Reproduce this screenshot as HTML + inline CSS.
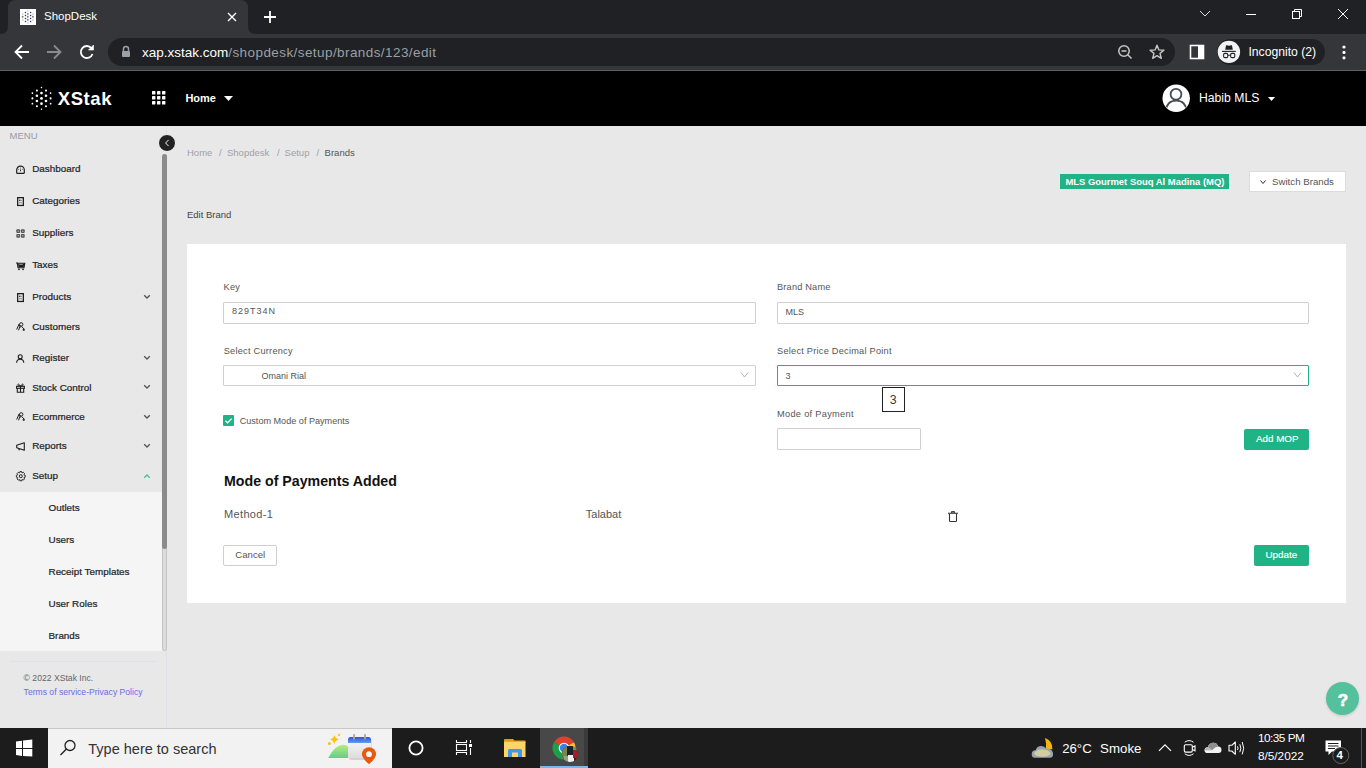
<!DOCTYPE html>
<html><head><meta charset="utf-8"><title>ShopDesk</title>
<style>
html,body{margin:0;padding:0;width:1366px;height:768px;overflow:hidden;background:#e8e8e8;font-family:"Liberation Sans",sans-serif}
.r{position:absolute;display:block}
.t{position:absolute;line-height:1;white-space:nowrap}
svg.r{overflow:visible}
</style></head><body>
<div class="r" style="left:0px;top:0px;width:1366px;height:34px;background:#202124"></div>
<svg class="r" style="left:0;top:0" width="260" height="34"><path d="M0 34 Q8 34 8 26 L8 8 Q8 0 16 0 L240 0 Q248 0 248 8 L248 26 Q248 34 256 34 Z" fill="#35363a"/></svg>
<svg class="r" style="left:20px;top:9px" width="16" height="16"><rect width="16" height="16" fill="#fff"/><circle cx="7.8" cy="2.0" r="0.85" fill="#c9c9d6"/><circle cx="5.5" cy="3.6" r="0.75" fill="#2f2f5c"/><circle cx="10.6" cy="3.6" r="0.75" fill="#2f2f5c"/><circle cx="2.7" cy="4.9" r="0.85" fill="#c9c9d6"/><circle cx="7.8" cy="4.9" r="0.95" fill="#7a7a9a"/><circle cx="12.9" cy="4.9" r="0.85" fill="#c9c9d6"/><circle cx="5.5" cy="6.5" r="0.75" fill="#2f2f5c"/><circle cx="10.6" cy="6.5" r="0.75" fill="#2f2f5c"/><circle cx="2.7" cy="7.8" r="0.95" fill="#7a7a9a"/><circle cx="7.8" cy="7.8" r="0.95" fill="#7a7a9a"/><circle cx="12.9" cy="7.8" r="0.95" fill="#7a7a9a"/><circle cx="5.5" cy="9.4" r="0.75" fill="#2f2f5c"/><circle cx="10.6" cy="9.4" r="0.75" fill="#2f2f5c"/><circle cx="2.7" cy="10.8" r="0.85" fill="#c9c9d6"/><circle cx="7.8" cy="10.8" r="0.95" fill="#7a7a9a"/><circle cx="12.9" cy="10.8" r="0.85" fill="#c9c9d6"/><circle cx="5.5" cy="12.4" r="0.75" fill="#2f2f5c"/><circle cx="10.6" cy="12.4" r="0.75" fill="#2f2f5c"/><circle cx="7.8" cy="13.8" r="0.85" fill="#c9c9d6"/></svg>
<div class="t" style="left:44.00px;top:11.26px;font-size:11.5px;color:#fff;font-weight:400;">ShopDesk</div>
<svg class="r" style="left:226px;top:11px" width="12" height="12"><path d="M2 2L10 10M10 2L2 10" stroke="#fff" stroke-width="1.4"/></svg>
<svg class="r" style="left:262px;top:9px" width="16" height="16"><path d="M8 2V14M2 8H14" stroke="#fff" stroke-width="1.8"/></svg>
<svg class="r" style="left:1195px;top:5px" width="171" height="24"><path d="M5 6L10 11L15 6" stroke="#ddd" stroke-width="1" fill="none"/><path d="M51 9.5H61" stroke="#fff" stroke-width="1"/><rect x="97.5" y="6.5" width="7" height="7" stroke="#fff" fill="none"/><path d="M99.5 6.5V4.5H106.5V11.5H104.5" stroke="#fff" fill="none"/><path d="M143 4L153 14M153 4L143 14" stroke="#fff" stroke-width="1"/></svg>
<div class="r" style="left:0px;top:34px;width:1366px;height:36px;background:#35363a"></div>
<div class="r" style="left:0px;top:70px;width:1366px;height:1px;background:#5f6064"></div>
<svg class="r" style="left:12px;top:42px" width="90" height="20"><path d="M17 10H4M10 3.5L3.5 10L10 16.5" stroke="#fff" stroke-width="1.8" fill="none"/><path d="M35 10H48M42 3.5L48.5 10L42 16.5" stroke="#8a8b8e" stroke-width="1.8" fill="none"/><path d="M79.5 6.2A6 6 0 1 0 80.5 12" stroke="#fff" stroke-width="1.8" fill="none"/><path d="M81.5 3V8H76.5Z" fill="#fff" stroke="#fff" stroke-width="0.6"/></svg>
<div class="r" style="left:108px;top:38px;width:1067px;height:28px;background:#202124;border-radius:14px"></div>
<svg class="r" style="left:121px;top:45px" width="10" height="13"><path d="M2.5 6V4A2.5 2.5 0 0 1 7.5 4V6" stroke="#9aa0a6" stroke-width="1.5" fill="none"/><rect x="1" y="6" width="8" height="6" rx="1" fill="#9aa0a6"/></svg>
<div class="t" style="left:142.00px;top:45.57px;font-size:13.5px;color:#9aa0a6;font-weight:400;"><span style="color:#fff">xap.xstak.com</span><span style="letter-spacing:0.42px">/shopdesk/setup/brands/123/edit</span></div>
<svg class="r" style="left:1115px;top:42px" width="55" height="20"><circle cx="9" cy="9" r="5.2" stroke="#c4c7c5" stroke-width="1.5" fill="none"/><path d="M6.5 9H11.5M12.8 12.8L16.5 16.5" stroke="#c4c7c5" stroke-width="1.5"/><path d="M42 3.2L43.9 7.9L48.9 8.2L45 11.4L46.3 16.3L42 13.6L37.7 16.3L39 11.4L35.1 8.2L40.1 7.9Z" stroke="#c4c7c5" stroke-width="1.4" fill="none" stroke-linejoin="round"/></svg>
<svg class="r" style="left:1189px;top:44px" width="16" height="16"><rect x="1.5" y="1.5" width="13" height="13" stroke="#fff" stroke-width="1.6" fill="none"/><rect x="9" y="1.5" width="5.5" height="13" fill="#fff"/></svg>
<div class="r" style="left:1217px;top:39px;width:108px;height:26px;background:#202124;border-radius:13px"></div>
<svg class="r" style="left:1218px;top:41px" width="23" height="23"><circle cx="10.9" cy="10.9" r="11.2" fill="#f1f3f4"/><path d="M7.2 8.8L8 4.6Q8.2 4 8.8 4.2L11 4.8L13.2 4.2Q13.8 4 14 4.6L14.8 8.8Z" fill="#202124"/><path d="M4 10.4H17.8" stroke="#202124" stroke-width="1.1"/><rect x="5.6" y="12.4" width="4.2" height="4.2" rx="1.4" stroke="#202124" stroke-width="1.1" fill="none"/><rect x="12.6" y="12.4" width="4.2" height="4.2" rx="1.4" stroke="#202124" stroke-width="1.1" fill="none"/><path d="M9.8 14.3H12.6" stroke="#202124" stroke-width="0.9"/></svg>
<div class="t" style="left:1248.40px;top:45.97px;font-size:12.2px;color:#fff;font-weight:400;">Incognito (2)</div>
<svg class="r" style="left:1340px;top:44px" width="8" height="17"><circle cx="4" cy="3" r="1.6" fill="#fff"/><circle cx="4" cy="8.4" r="1.6" fill="#fff"/><circle cx="4" cy="13.8" r="1.6" fill="#fff"/></svg>
<div class="r" style="left:0px;top:71px;width:1366px;height:657px;background:#e8e8e8"></div>
<div class="r" style="left:0px;top:71px;width:1366px;height:55px;background:#000"></div>
<svg class="r" style="left:28px;top:84px" width="28" height="28"><circle cx="13.5" cy="3.5999999999999943" r="0.75" fill="#fff"/><circle cx="13.5" cy="9.099999999999994" r="1.35" fill="#fff"/><circle cx="13.5" cy="14.400000000000006" r="1.4" fill="#fff"/><circle cx="13.5" cy="19.700000000000003" r="1.35" fill="#fff"/><circle cx="13.5" cy="25.200000000000003" r="0.75" fill="#fff"/><circle cx="8.899999999999999" cy="6.599999999999994" r="1.05" fill="#fff"/><circle cx="18" cy="6.599999999999994" r="1.05" fill="#fff"/><circle cx="8.899999999999999" cy="11.799999999999997" r="1.3" fill="#fff"/><circle cx="18" cy="11.799999999999997" r="1.3" fill="#fff"/><circle cx="8.899999999999999" cy="17" r="1.3" fill="#fff"/><circle cx="18" cy="17" r="1.3" fill="#fff"/><circle cx="8.899999999999999" cy="22.200000000000003" r="1.05" fill="#fff"/><circle cx="18" cy="22.200000000000003" r="1.05" fill="#fff"/><circle cx="4.399999999999999" cy="9.099999999999994" r="0.9" fill="#fff"/><circle cx="22.6" cy="9.099999999999994" r="0.9" fill="#fff"/><circle cx="4.399999999999999" cy="14.400000000000006" r="1.05" fill="#fff"/><circle cx="22.6" cy="14.400000000000006" r="1.05" fill="#fff"/><circle cx="4.399999999999999" cy="19.700000000000003" r="0.9" fill="#fff"/><circle cx="22.6" cy="19.700000000000003" r="0.9" fill="#fff"/></svg>
<div class="t" style="left:57.70px;top:90.04px;font-size:18.5px;color:#fff;font-weight:700;letter-spacing:0.6px">XStak</div>
<svg class="r" style="left:152px;top:91px" width="14" height="14"><rect x="0" y="0" width="3.4" height="3.4" rx="0.5" fill="#fff"/><rect x="5" y="0" width="3.4" height="3.4" rx="0.5" fill="#fff"/><rect x="10" y="0" width="3.4" height="3.4" rx="0.5" fill="#fff"/><rect x="0" y="5" width="3.4" height="3.4" rx="0.5" fill="#fff"/><rect x="5" y="5" width="3.4" height="3.4" rx="0.5" fill="#fff"/><rect x="10" y="5" width="3.4" height="3.4" rx="0.5" fill="#fff"/><rect x="0" y="10" width="3.4" height="3.4" rx="0.5" fill="#fff"/><rect x="5" y="10" width="3.4" height="3.4" rx="0.5" fill="#fff"/><rect x="10" y="10" width="3.4" height="3.4" rx="0.5" fill="#fff"/></svg>
<div class="t" style="left:185.40px;top:92.69px;font-size:11px;color:#fff;font-weight:700;">Home</div>
<svg class="r" style="left:224px;top:96px" width="9" height="6"><path d="M0 0H9L4.5 5Z" fill="#fff"/></svg>
<svg class="r" style="left:1162px;top:84px" width="28" height="28"><defs><clipPath id="avc"><circle cx="14.2" cy="14.2" r="13.2"/></clipPath></defs><circle cx="14.2" cy="14.2" r="13.7" fill="#fff"/><circle cx="14" cy="10.2" r="5.4" stroke="#474d55" stroke-width="1.8" fill="none"/><path d="M3.8 27Q4.8 16.6 14.2 16.6Q23.6 16.6 24.6 27" stroke="#474d55" stroke-width="1.8" fill="none" clip-path="url(#avc)"/></svg>
<div class="t" style="left:1199.00px;top:91.67px;font-size:12.2px;color:#fff;font-weight:400;">Habib MLS</div>
<svg class="r" style="left:1267.5px;top:96.5px" width="8" height="5"><path d="M0 0H7L3.5 4Z" fill="#fff"/></svg>
<div class="r" style="left:166px;top:126px;width:1px;height:602px;background:#e0e0e6"></div>
<div class="t" style="left:9.60px;top:130.96px;font-size:9.5px;color:#9a9aa5;font-weight:400;">MENU</div>
<div class="t" style="left:32.20px;top:163.72px;font-size:9.9px;color:#1f1f27;font-weight:400;-webkit-text-stroke:0.22px #1f1f27">Dashboard</div>
<div class="t" style="left:32.20px;top:195.62px;font-size:9.9px;color:#1f1f27;font-weight:400;-webkit-text-stroke:0.22px #1f1f27">Categories</div>
<div class="t" style="left:32.20px;top:227.62px;font-size:9.9px;color:#1f1f27;font-weight:400;-webkit-text-stroke:0.22px #1f1f27">Suppliers</div>
<div class="t" style="left:32.20px;top:259.82px;font-size:9.9px;color:#1f1f27;font-weight:400;-webkit-text-stroke:0.22px #1f1f27">Taxes</div>
<div class="t" style="left:32.20px;top:292.12px;font-size:9.9px;color:#1f1f27;font-weight:400;-webkit-text-stroke:0.22px #1f1f27">Products</div>
<svg class="r" style="left:143px;top:293.7px" width="8" height="6"><path d="M1.2 1.2L4 4L6.8 1.2" stroke="#555" stroke-width="1.3" fill="none"/></svg>
<div class="t" style="left:32.20px;top:322.12px;font-size:9.9px;color:#1f1f27;font-weight:400;-webkit-text-stroke:0.22px #1f1f27">Customers</div>
<div class="t" style="left:32.20px;top:352.92px;font-size:9.9px;color:#1f1f27;font-weight:400;-webkit-text-stroke:0.22px #1f1f27">Register</div>
<svg class="r" style="left:143px;top:354.5px" width="8" height="6"><path d="M1.2 1.2L4 4L6.8 1.2" stroke="#555" stroke-width="1.3" fill="none"/></svg>
<div class="t" style="left:32.20px;top:382.82px;font-size:9.9px;color:#1f1f27;font-weight:400;-webkit-text-stroke:0.22px #1f1f27">Stock Control</div>
<svg class="r" style="left:143px;top:384.4px" width="8" height="6"><path d="M1.2 1.2L4 4L6.8 1.2" stroke="#555" stroke-width="1.3" fill="none"/></svg>
<div class="t" style="left:32.20px;top:412.12px;font-size:9.9px;color:#1f1f27;font-weight:400;-webkit-text-stroke:0.22px #1f1f27">Ecommerce</div>
<svg class="r" style="left:143px;top:413.7px" width="8" height="6"><path d="M1.2 1.2L4 4L6.8 1.2" stroke="#555" stroke-width="1.3" fill="none"/></svg>
<div class="t" style="left:32.20px;top:440.92px;font-size:9.9px;color:#1f1f27;font-weight:400;-webkit-text-stroke:0.22px #1f1f27">Reports</div>
<svg class="r" style="left:143px;top:442.5px" width="8" height="6"><path d="M1.2 1.2L4 4L6.8 1.2" stroke="#555" stroke-width="1.3" fill="none"/></svg>
<div class="t" style="left:32.20px;top:471.22px;font-size:9.9px;color:#1f1f27;font-weight:400;-webkit-text-stroke:0.22px #1f1f27">Setup</div>
<svg class="r" style="left:143px;top:473.1px" width="8" height="6"><path d="M1.2 4.8L4 2L6.8 4.8" stroke="#45c097" stroke-width="1.3" fill="none"/></svg>
<svg class="r" style="left:16px;top:165px" width="9" height="9"><path d="M0.7 7.8V4.9A3.8 3.8 0 0 1 8.3 4.9V7.8Q8.3 8.3 7.8 8.3H1.2Q0.7 8.3 0.7 7.8Z" stroke="#1e1e1e" stroke-width="1.2" fill="none"/><circle cx="2.7" cy="4.2" r="0.5" fill="#444"/><circle cx="4.5" cy="3" r="0.5" fill="#444"/><circle cx="6.3" cy="4.2" r="0.5" fill="#444"/><path d="M4.5 4.5V6.3" stroke="#333" stroke-width="1"/></svg>
<svg class="r" style="left:17px;top:197px" width="7" height="9"><rect x="0.65" y="0.65" width="5.7" height="7.8" stroke="#1e1e1e" stroke-width="1.3" fill="none"/><path d="M2 3.3H5M2 5.7H5" stroke="#888" stroke-width="1"/><path d="M2 3.3H3.3" stroke="#333" stroke-width="1"/></svg>
<svg class="r" style="left:16px;top:229px" width="9" height="9"><rect x="0.3" y="0.3" width="3.8" height="3.8" rx="1" fill="#555"/><rect x="1.7" y="1.7" width="1" height="1" fill="#eee"/><rect x="4.9" y="0.3" width="3.8" height="3.8" rx="1" fill="#555"/><rect x="6.300000000000001" y="1.7" width="1" height="1" fill="#eee"/><rect x="0.3" y="4.9" width="3.8" height="3.8" rx="1" fill="#555"/><rect x="1.7" y="6.300000000000001" width="1" height="1" fill="#eee"/><rect x="4.9" y="4.9" width="3.8" height="3.8" rx="1" fill="#555"/><rect x="6.300000000000001" y="6.300000000000001" width="1" height="1" fill="#eee"/></svg>
<svg class="r" style="left:16px;top:261.5px" width="9" height="8.5"><path d="M0 1H1.3L2 5.8H8L8.8 1.3H1.6" stroke="#1e1e1e" stroke-width="1.1" fill="none"/><path d="M2 1.8H8.3L7.7 5.3H2.5Z" fill="#1e1e1e"/><path d="M3.2 2.5H6.8" stroke="#aaa" stroke-width="0.8"/><circle cx="3" cy="7.3" r="0.9" fill="#1e1e1e"/><circle cx="7" cy="7.3" r="0.9" fill="#1e1e1e"/></svg>
<svg class="r" style="left:17px;top:293px" width="7" height="9"><rect x="0.65" y="0.65" width="5.7" height="7.8" stroke="#1e1e1e" stroke-width="1.3" fill="none"/><path d="M2 3.3H5M2 5.7H5" stroke="#888" stroke-width="1"/><path d="M2 3.3H3.3" stroke="#333" stroke-width="1"/></svg>
<svg class="r" style="left:16px;top:322px" width="9" height="9"><path d="M0.7 7.5L3 2.2L4.6 5.5" stroke="#1e1e1e" stroke-width="1" fill="none"/><circle cx="5.2" cy="2.4" r="1.7" stroke="#1e1e1e" stroke-width="1" fill="none"/><path d="M3.8 4.5L2.6 8.3M5.5 4.3L8 7" stroke="#1e1e1e" stroke-width="1" fill="none"/><path d="M6.5 7.8H9M7.75 6.5V9" stroke="#1e1e1e" stroke-width="0.9"/></svg>
<svg class="r" style="left:16.2px;top:354px" width="9" height="9"><circle cx="4.2" cy="2.8" r="2" stroke="#1e1e1e" stroke-width="1.1" fill="none"/><path d="M0.6 8.8Q0.8 5.3 4.2 5.3Q7.6 5.3 7.8 8.8" stroke="#1e1e1e" stroke-width="1.1" fill="none"/></svg>
<svg class="r" style="left:16px;top:383px" width="9" height="10"><rect x="0.6" y="3.3" width="7.8" height="2" stroke="#1e1e1e" stroke-width="1.1" fill="none"/><path d="M1.3 5.3V9.3H7.7V5.3M4.5 3.3V9.3" stroke="#1e1e1e" stroke-width="1.1" fill="none"/><path d="M4.5 3.2Q2 -0.5 1.8 2Q1.8 3 4.5 3.2Q7 -0.5 7.2 2Q7.2 3 4.5 3.2" stroke="#1e1e1e" stroke-width="0.9" fill="none"/></svg>
<svg class="r" style="left:16px;top:412px" width="9" height="9"><path d="M0.7 7.5L3 2.2L4.6 5.5" stroke="#1e1e1e" stroke-width="1" fill="none"/><circle cx="5.2" cy="2.4" r="1.7" stroke="#1e1e1e" stroke-width="1" fill="none"/><path d="M3.8 4.5L2.6 8.3M5.5 4.3L8 7" stroke="#1e1e1e" stroke-width="1" fill="none"/><path d="M6.5 7.8H9M7.75 6.5V9" stroke="#1e1e1e" stroke-width="0.9"/></svg>
<svg class="r" style="left:16px;top:442px" width="9" height="9"><path d="M0.7 3.3L8.3 0.7V8.3L0.7 5.7Z" stroke="#1e1e1e" stroke-width="1.1" fill="none" stroke-linejoin="round"/><path d="M2.6 6.2L3.4 8.2" stroke="#1e1e1e" stroke-width="1.1"/></svg>
<svg class="r" style="left:16px;top:470.5px" width="10" height="10.5"><circle cx="4.8" cy="5.2" r="1.5" stroke="#1e1e1e" stroke-width="1" fill="none"/><path d="M3.9 0.6H5.7L6 1.9L7.3 1.3L8.5 2.5L7.9 3.8L9.2 4.3V6.1L7.9 6.6L8.5 7.9L7.3 9.1L6 8.5L5.7 9.8H3.9L3.6 8.5L2.3 9.1L1.1 7.9L1.7 6.6L0.4 6.1V4.3L1.7 3.8L1.1 2.5L2.3 1.3L3.6 1.9Z" stroke="#1e1e1e" stroke-width="0.95" fill="none" stroke-linejoin="round"/></svg>
<div class="r" style="left:0px;top:492px;width:162px;height:159px;background:#f5f5f5"></div>
<div class="t" style="left:48.50px;top:502.82px;font-size:9.9px;color:#1f1f27;font-weight:400;-webkit-text-stroke:0.22px #1f1f27">Outlets</div>
<div class="t" style="left:48.50px;top:534.82px;font-size:9.9px;color:#1f1f27;font-weight:400;-webkit-text-stroke:0.22px #1f1f27">Users</div>
<div class="t" style="left:48.50px;top:566.82px;font-size:9.9px;color:#1f1f27;font-weight:400;-webkit-text-stroke:0.22px #1f1f27">Receipt Templates</div>
<div class="t" style="left:48.50px;top:598.82px;font-size:9.9px;color:#1f1f27;font-weight:400;-webkit-text-stroke:0.22px #1f1f27">User Roles</div>
<div class="t" style="left:48.50px;top:630.82px;font-size:9.9px;color:#1f1f27;font-weight:400;-webkit-text-stroke:0.22px #1f1f27">Brands</div>
<div class="r" style="left:162px;top:154px;width:5px;height:497px;background:#dcdcdc;border:1px solid #c4c4c4;box-sizing:border-box;border-radius:3px"></div>
<div class="r" style="left:162px;top:154px;width:5px;height:395px;background:#8b8b8b;border-radius:3px"></div>
<div class="r" style="left:10px;top:661px;width:147px;height:1px;background:#e0e0ea"></div>
<div class="t" style="left:23.60px;top:673.68px;font-size:8.65px;color:#666;font-weight:400;">&copy; 2022 XStak Inc.</div>
<div class="t" style="left:23.60px;top:687.72px;font-size:8.6px;color:#6c6ce0;font-weight:400;">Terms of service-Privacy Policy</div>
<div class="r" style="left:158px;top:134px;width:18px;height:18px;background:#222;border-radius:50%;border:1px solid #f4f4f4;box-sizing:border-box"></div>
<svg class="r" style="left:163px;top:138px" width="8" height="10"><path d="M5.6 1.9L2.6 5L5.6 8.1" stroke="#fff" stroke-width="0.95" fill="none"/></svg>
<div class="t" style="left:187.00px;top:148.26px;font-size:9.5px;color:#a0a0a8;font-weight:400;">Home</div>
<div class="t" style="left:219.00px;top:148.26px;font-size:9.5px;color:#a0a0a8;font-weight:400;">/</div>
<div class="t" style="left:227.00px;top:148.26px;font-size:9.5px;color:#a0a0a8;font-weight:400;">Shopdesk</div>
<div class="t" style="left:277.00px;top:148.26px;font-size:9.5px;color:#a0a0a8;font-weight:400;">/</div>
<div class="t" style="left:284.60px;top:148.26px;font-size:9.5px;color:#a0a0a8;font-weight:400;">Setup</div>
<div class="t" style="left:316.50px;top:148.26px;font-size:9.5px;color:#a0a0a8;font-weight:400;">/</div>
<div class="t" style="left:324.60px;top:148.26px;font-size:9.5px;color:#555;font-weight:400;">Brands</div>
<div class="t" style="left:187.00px;top:210.16px;font-size:9.5px;color:#444;font-weight:400;">Edit Brand</div>
<div class="r" style="left:1060px;top:174px;width:169px;height:15px;background:#20b386"></div>
<div class="t" style="left:1065.40px;top:176.50px;font-size:9.45px;color:#fff;font-weight:700;">MLS Gourmet Souq Al Madina (MQ)</div>
<div class="r" style="left:1249px;top:171px;width:97px;height:21px;background:#fff;border:1px solid #dcdcdc;box-sizing:border-box"></div>
<svg class="r" style="left:1259px;top:179px" width="8" height="7"><path d="M1.5 1.5L4 4.5L6.5 1.5" stroke="#333" stroke-width="1" fill="none"/></svg>
<div class="t" style="left:1272.00px;top:177.49px;font-size:9.7px;color:#555;font-weight:400;">Switch Brands</div>
<div class="r" style="left:187px;top:244px;width:1159px;height:359px;background:#fff"></div>
<div class="t" style="left:223.60px;top:282.81px;font-size:9.2px;color:#555;font-weight:400;letter-spacing:0.25px">Key</div>
<div class="r" style="left:223px;top:302px;width:533px;height:22px;border:1px solid #d0d0d0;box-sizing:border-box;border-radius:1px"></div>
<div class="t" style="left:232.00px;top:307.28px;font-size:9px;color:#555;font-weight:400;letter-spacing:1px">829T34N</div>
<div class="t" style="left:777.00px;top:282.91px;font-size:9.2px;color:#555;font-weight:400;letter-spacing:0.2px">Brand Name</div>
<div class="r" style="left:777px;top:302px;width:532px;height:22px;border:1px solid #d0d0d0;box-sizing:border-box;border-radius:1px"></div>
<div class="t" style="left:785.60px;top:307.58px;font-size:9px;color:#555;font-weight:400;">MLS</div>
<div class="t" style="left:223.70px;top:347.01px;font-size:9.2px;color:#555;font-weight:400;letter-spacing:0.25px">Select Currency</div>
<div class="r" style="left:223px;top:365px;width:533px;height:21px;border:1px solid #d0d0d0;box-sizing:border-box;border-radius:1px"></div>
<div class="t" style="left:261.40px;top:371.78px;font-size:9px;color:#555;font-weight:400;">Omani Rial</div>
<svg class="r" style="left:740px;top:371px" width="9" height="8"><path d="M1 1.5L4.5 6L8 1.5" stroke="#aaa" stroke-width="0.9" fill="none"/></svg>
<div class="t" style="left:777.00px;top:347.01px;font-size:9.2px;color:#555;font-weight:400;letter-spacing:0.25px">Select Price Decimal Point</div>
<div class="r" style="left:777px;top:365px;width:532px;height:21px;border:1px solid #20b386;box-sizing:border-box;border-radius:1px"></div>
<div class="t" style="left:785.60px;top:371.68px;font-size:9px;color:#555;font-weight:400;">3</div>
<svg class="r" style="left:1293px;top:371px" width="9" height="8"><path d="M1 1.5L4.5 6L8 1.5" stroke="#aaa" stroke-width="0.9" fill="none"/></svg>
<div class="r" style="left:882px;top:387px;width:23px;height:25px;background:#fff;border:1px solid #222;box-sizing:border-box"></div>
<div class="t" style="left:889.80px;top:393.99px;font-size:12.3px;color:#3a3a3a;font-weight:400;">3</div>
<div class="r" style="left:223px;top:415px;width:11px;height:11px;background:#20b386;border-radius:1px"></div>
<svg class="r" style="left:223px;top:415px" width="11" height="11"><path d="M2.5 5.8L4.6 7.8L8.6 3.6" stroke="#fff" stroke-width="1.3" fill="none"/></svg>
<div class="t" style="left:239.70px;top:417.00px;font-size:9.1px;color:#555;font-weight:400;">Custom Mode of Payments</div>
<div class="t" style="left:777.00px;top:410.11px;font-size:9.2px;color:#555;font-weight:400;letter-spacing:0.32px">Mode of Payment</div>
<div class="r" style="left:777px;top:428px;width:144px;height:22px;border:1px solid #d0d0d0;box-sizing:border-box;border-radius:1px"></div>
<div class="r" style="left:1244px;top:429px;width:65px;height:21px;background:#20b386;border-radius:2px"></div>
<div class="t" style="left:1256.00px;top:433.90px;font-size:9.8px;color:#fff;font-weight:400;-webkit-text-stroke:0.15px #fff">Add MOP</div>
<div class="t" style="left:224.00px;top:473.98px;font-size:14.2px;color:#111;font-weight:700;">Mode of Payments Added</div>
<div class="t" style="left:224.00px;top:509.19px;font-size:11px;color:#555;font-weight:400;letter-spacing:0.35px">Method-1</div>
<div class="t" style="left:585.80px;top:508.59px;font-size:11px;color:#555;font-weight:400;">Talabat</div>
<svg class="r" style="left:947px;top:510px" width="12" height="13"><path d="M4.5 3V1.5H7.5V3" stroke="#444" stroke-width="1" fill="#888"/><path d="M1 3.3H11" stroke="#444" stroke-width="1.2"/><path d="M2.5 4V10.8Q2.5 11.5 3.2 11.5H8.8Q9.5 11.5 9.5 10.8V4" stroke="#333" stroke-width="1.1" fill="none"/></svg>
<div class="r" style="left:223px;top:545px;width:54px;height:21px;background:#fff;border:1px solid #cfcfcf;box-sizing:border-box;border-radius:2px"></div>
<div class="t" style="left:235.30px;top:549.87px;font-size:9.6px;color:#555;font-weight:400;">Cancel</div>
<div class="r" style="left:1254px;top:545px;width:55px;height:21px;background:#20b386;border-radius:2px"></div>
<div class="t" style="left:1265.50px;top:549.60px;font-size:9.8px;color:#fff;font-weight:400;-webkit-text-stroke:0.15px #fff">Update</div>
<div class="r" style="left:1326px;top:682px;width:33px;height:33px;background:#55c09c;border-radius:50%;box-shadow:0 1px 3px rgba(0,0,0,0.15)"></div>
<div class="t" style="left:1337.80px;top:691.61px;font-size:17px;color:#fff;font-weight:700;-webkit-text-stroke:0.7px #fff">?</div>
<div class="r" style="left:0px;top:728px;width:1366px;height:40px;background:#1c1c1c"></div>
<svg class="r" style="left:15px;top:739px" width="19" height="19"><path d="M1 2.6L7 1.8V9H1Z M8 1.6L17.3 0.6V9H8Z M1 10H7V16.9L1 16.1Z M8 10H17.3V17.6L8 16.9Z" fill="#fff"/></svg>
<div class="r" style="left:48px;top:728px;width:344px;height:40px;background:#f2f2f2"></div>
<div class="r" style="left:48px;top:728px;width:344px;height:1px;background:#c8c8c8"></div>
<svg class="r" style="left:59px;top:739px" width="18" height="18"><circle cx="11" cy="6.5" r="5" stroke="#222" stroke-width="1.3" fill="none"/><path d="M7.4 10.1L1.5 16" stroke="#222" stroke-width="1.4"/></svg>
<div class="t" style="left:88.30px;top:741.92px;font-size:14.5px;color:#333;font-weight:400;">Type here to search</div>
<svg class="r" style="left:322px;top:730px" width="60" height="38"><defs><linearGradient id="hg" x1="0" y1="0" x2="0" y2="1"><stop offset="0" stop-color="#b4ec7c"/><stop offset="1" stop-color="#66cc8a"/></linearGradient><linearGradient id="cg" x1="0" y1="0" x2="0" y2="1"><stop offset="0" stop-color="#2f50d6"/><stop offset="1" stop-color="#5f9fea"/></linearGradient><linearGradient id="bg2" x1="0" y1="0" x2="0" y2="1"><stop offset="0" stop-color="#fafafa"/><stop offset="1" stop-color="#dcdcdc"/></linearGradient></defs><path d="M12.4 5Q13.2 8.6 16.9 9.4Q13.2 10.2 12.4 13.9Q11.6 10.2 7.9 9.4Q11.6 8.6 12.4 5Z" fill="#ffc107"/><circle cx="17.1" cy="4.9" r="1.1" fill="#ffc107"/><circle cx="7.4" cy="13.4" r="1.5" fill="#ffc107"/><path d="M6.2 27.9Q13 15 21 14.8Q24.6 14.8 26.2 17V27.9Z" fill="url(#hg)"/><rect x="27" y="8" width="22.5" height="21.7" rx="2.5" fill="#c8c8c8"/><rect x="26" y="7" width="23" height="21.5" rx="2.5" fill="url(#bg2)"/><path d="M26 13V9.5Q26 6.9 28.6 6.9H46.4Q49 6.9 49 9.5V13Z" fill="url(#cg)"/><rect x="31.2" y="4" width="1.8" height="5.6" rx="0.6" fill="#a8a8a8"/><rect x="42.1" y="4" width="1.8" height="5.6" rx="0.6" fill="#a8a8a8"/><path d="M47 17.2A7 7 0 0 1 54 24.2C54 28.5 47 34.2 47 34.2C47 34.2 40 28.5 40 24.2A7 7 0 0 1 47 17.2Z" fill="#e8590f"/><circle cx="47" cy="24.2" r="2.9" fill="#f6f6f6"/></svg>
<svg class="r" style="left:407px;top:739px" width="18" height="18"><circle cx="9" cy="9" r="6.6" stroke="#fff" stroke-width="1.8" fill="none"/></svg>
<svg class="r" style="left:450px;top:735px" width="30" height="25"><path d="M6.5 5V7.5H16.5V5 M6.5 20V17.5H16.5V20" stroke="#fff" stroke-width="1.1" fill="none"/><rect x="6.5" y="9.5" width="10" height="6" stroke="#fff" stroke-width="1.1" fill="none"/><path d="M20.5 5V8 M20.5 13V20" stroke="#fff" stroke-width="1.1"/><rect x="19" y="9" width="3" height="3" fill="#fff"/></svg>
<svg class="r" style="left:503px;top:738px" width="24" height="21"><path d="M1 2Q1 1 2 1H10L11.5 2.5H22Q22.5 2.5 22.5 3V5H1Z" fill="#e4a200"/><rect x="1" y="3.8" width="21.5" height="15.2" fill="#fcd467"/><path d="M5 19V12.5Q5 11 6.5 11H17.5Q19 11 19 12.5V19H15V14.5H9V19Z" fill="#3d9ae8"/></svg>
<div class="r" style="left:540px;top:728px;width:44px;height:40px;background:#484848"></div>
<div class="r" style="left:584px;top:728px;width:4px;height:40px;background:#3a3a3a"></div>
<div class="r" style="left:540px;top:766px;width:48px;height:2px;background:#76b9ed"></div>
<svg class="r" style="left:552px;top:736px" width="28" height="28"><defs><clipPath id="av"><circle cx="18" cy="18" r="8"/></clipPath></defs><path d="M12 12L2.04 6.25A11.5 11.5 0 0 1 21.96 6.25Z" fill="#e0412f"/><path d="M12 12L21.96 6.25A11.5 11.5 0 0 1 12 23.5Z" fill="#f6c02a"/><path d="M12 12L12 23.5A11.5 11.5 0 0 1 2.04 6.25Z" fill="#1f9e4a"/><circle cx="12" cy="12" r="5.3" fill="#fff"/><circle cx="12" cy="12" r="4.2" fill="#3b82e8"/><g clip-path="url(#av)"><rect x="9" y="9" width="18" height="18" fill="#2a2a22"/><rect x="9" y="9" width="6" height="18" fill="#7a8650"/><rect x="12" y="20" width="4" height="7" fill="#a09a80"/><rect x="15" y="9" width="6" height="10" fill="#1e2030"/><rect x="16" y="19" width="6" height="8" fill="#f0f0f0"/><rect x="21" y="14" width="6" height="8" fill="#a81c24"/><rect x="21" y="11" width="5" height="3" fill="#5a9a80"/></g></svg>
<svg class="r" style="left:1028px;top:735px" width="30" height="25"><path d="M17 3Q24.8 6 24.4 14.2L17.6 14.2Q18.8 8.5 17 3Z" fill="#f5b50a"/><path d="M6.8 22.8Q3.7 22.8 3.7 19.2Q3.7 15.3 7.6 15.2Q9.2 11 13.2 11Q16.6 11 17.8 13.6Q21.4 12.8 23.6 15.2Q25.1 16.8 25.1 19.2Q25.1 22.8 21.6 22.8Z" fill="#98a6b4"/><ellipse cx="14.3" cy="18.2" rx="8" ry="3.6" fill="#d4cda0"/></svg>
<div class="t" style="left:1062.20px;top:741.82px;font-size:13.2px;color:#fff;font-weight:400;">26&deg;C</div>
<div class="t" style="left:1100.10px;top:742.44px;font-size:13.3px;color:#fff;font-weight:400;">Smoke</div>
<svg class="r" style="left:1157px;top:742px" width="16" height="11"><path d="M2 8.8L8 2.8L14 8.8" stroke="#fff" stroke-width="1.2" fill="none"/></svg>
<svg class="r" style="left:1182px;top:739px" width="16" height="19"><path d="M2.8 3.2Q7 0 11.5 3.2 M2.8 14.8Q7 18 11.5 14.8" stroke="#fff" stroke-width="1" fill="none"/><rect x="2.3" y="5.8" width="8" height="7.3" rx="1.3" stroke="#fff" stroke-width="1.1" fill="none"/><path d="M10.3 8.3L13 7V11.8L10.3 10.5" stroke="#fff" stroke-width="1.1" fill="none"/></svg>
<svg class="r" style="left:1204px;top:742px" width="18" height="12"><path d="M3.5 11Q0.5 11 0.5 8.2Q0.5 5.3 3.8 5.3Q5 0.8 9.5 0.8Q13.2 0.8 14.3 4.6Q17.5 4.8 17.5 8Q17.5 11 14.5 11Z" fill="#f2f2f2"/><path d="M3.8 5.3Q5 0.8 9.5 0.8Q13.2 0.8 14.3 4.6Q11 5 8 8.2Q5.5 6 3.8 5.3Z" fill="#8e8e8e"/><path d="M0.6 8.3Q0.8 5.5 3.8 5.3Q6 5.8 8.2 8.3Q5 8.6 0.6 8.3Z" fill="#b8b8b8"/></svg>
<svg class="r" style="left:1228px;top:740px" width="19" height="17"><path d="M1 5.3H3.8L7.3 2V14.3L3.8 11H1Z" stroke="#fff" stroke-width="1.1" fill="none" stroke-linejoin="round"/><path d="M9.5 6.3Q10.6 8.2 9.5 10 M11.8 4.2Q13.9 8.2 11.8 12.2 M14.2 2Q17.2 8.2 14.2 14.4" stroke="#fff" stroke-width="1" fill="none"/></svg>
<div class="t" style="left:1257.90px;top:733.21px;font-size:11.8px;color:#fff;font-weight:400;letter-spacing:-0.5px">10:35 PM</div>
<div class="t" style="left:1257.90px;top:750.91px;font-size:11.8px;color:#fff;font-weight:400;">8/5/2022</div>
<svg class="r" style="left:1324px;top:739px" width="28" height="27"><path d="M1.5 1.5H17V12.5H8L4.5 16V12.5H1.5Z" fill="#fff"/><path d="M4 4.5H14.5M4 7H14.5M4 9.5H11" stroke="#1c1c1c" stroke-width="1.1"/><circle cx="16.8" cy="16.5" r="8" fill="#1c1c1c" stroke="#666" stroke-width="1"/></svg>
<div class="t" style="left:1336.50px;top:749.76px;font-size:11.5px;color:#fff;font-weight:700;">4</div>
<div class="r" style="left:1361px;top:728px;width:1px;height:40px;background:#555"></div>
</body></html>
